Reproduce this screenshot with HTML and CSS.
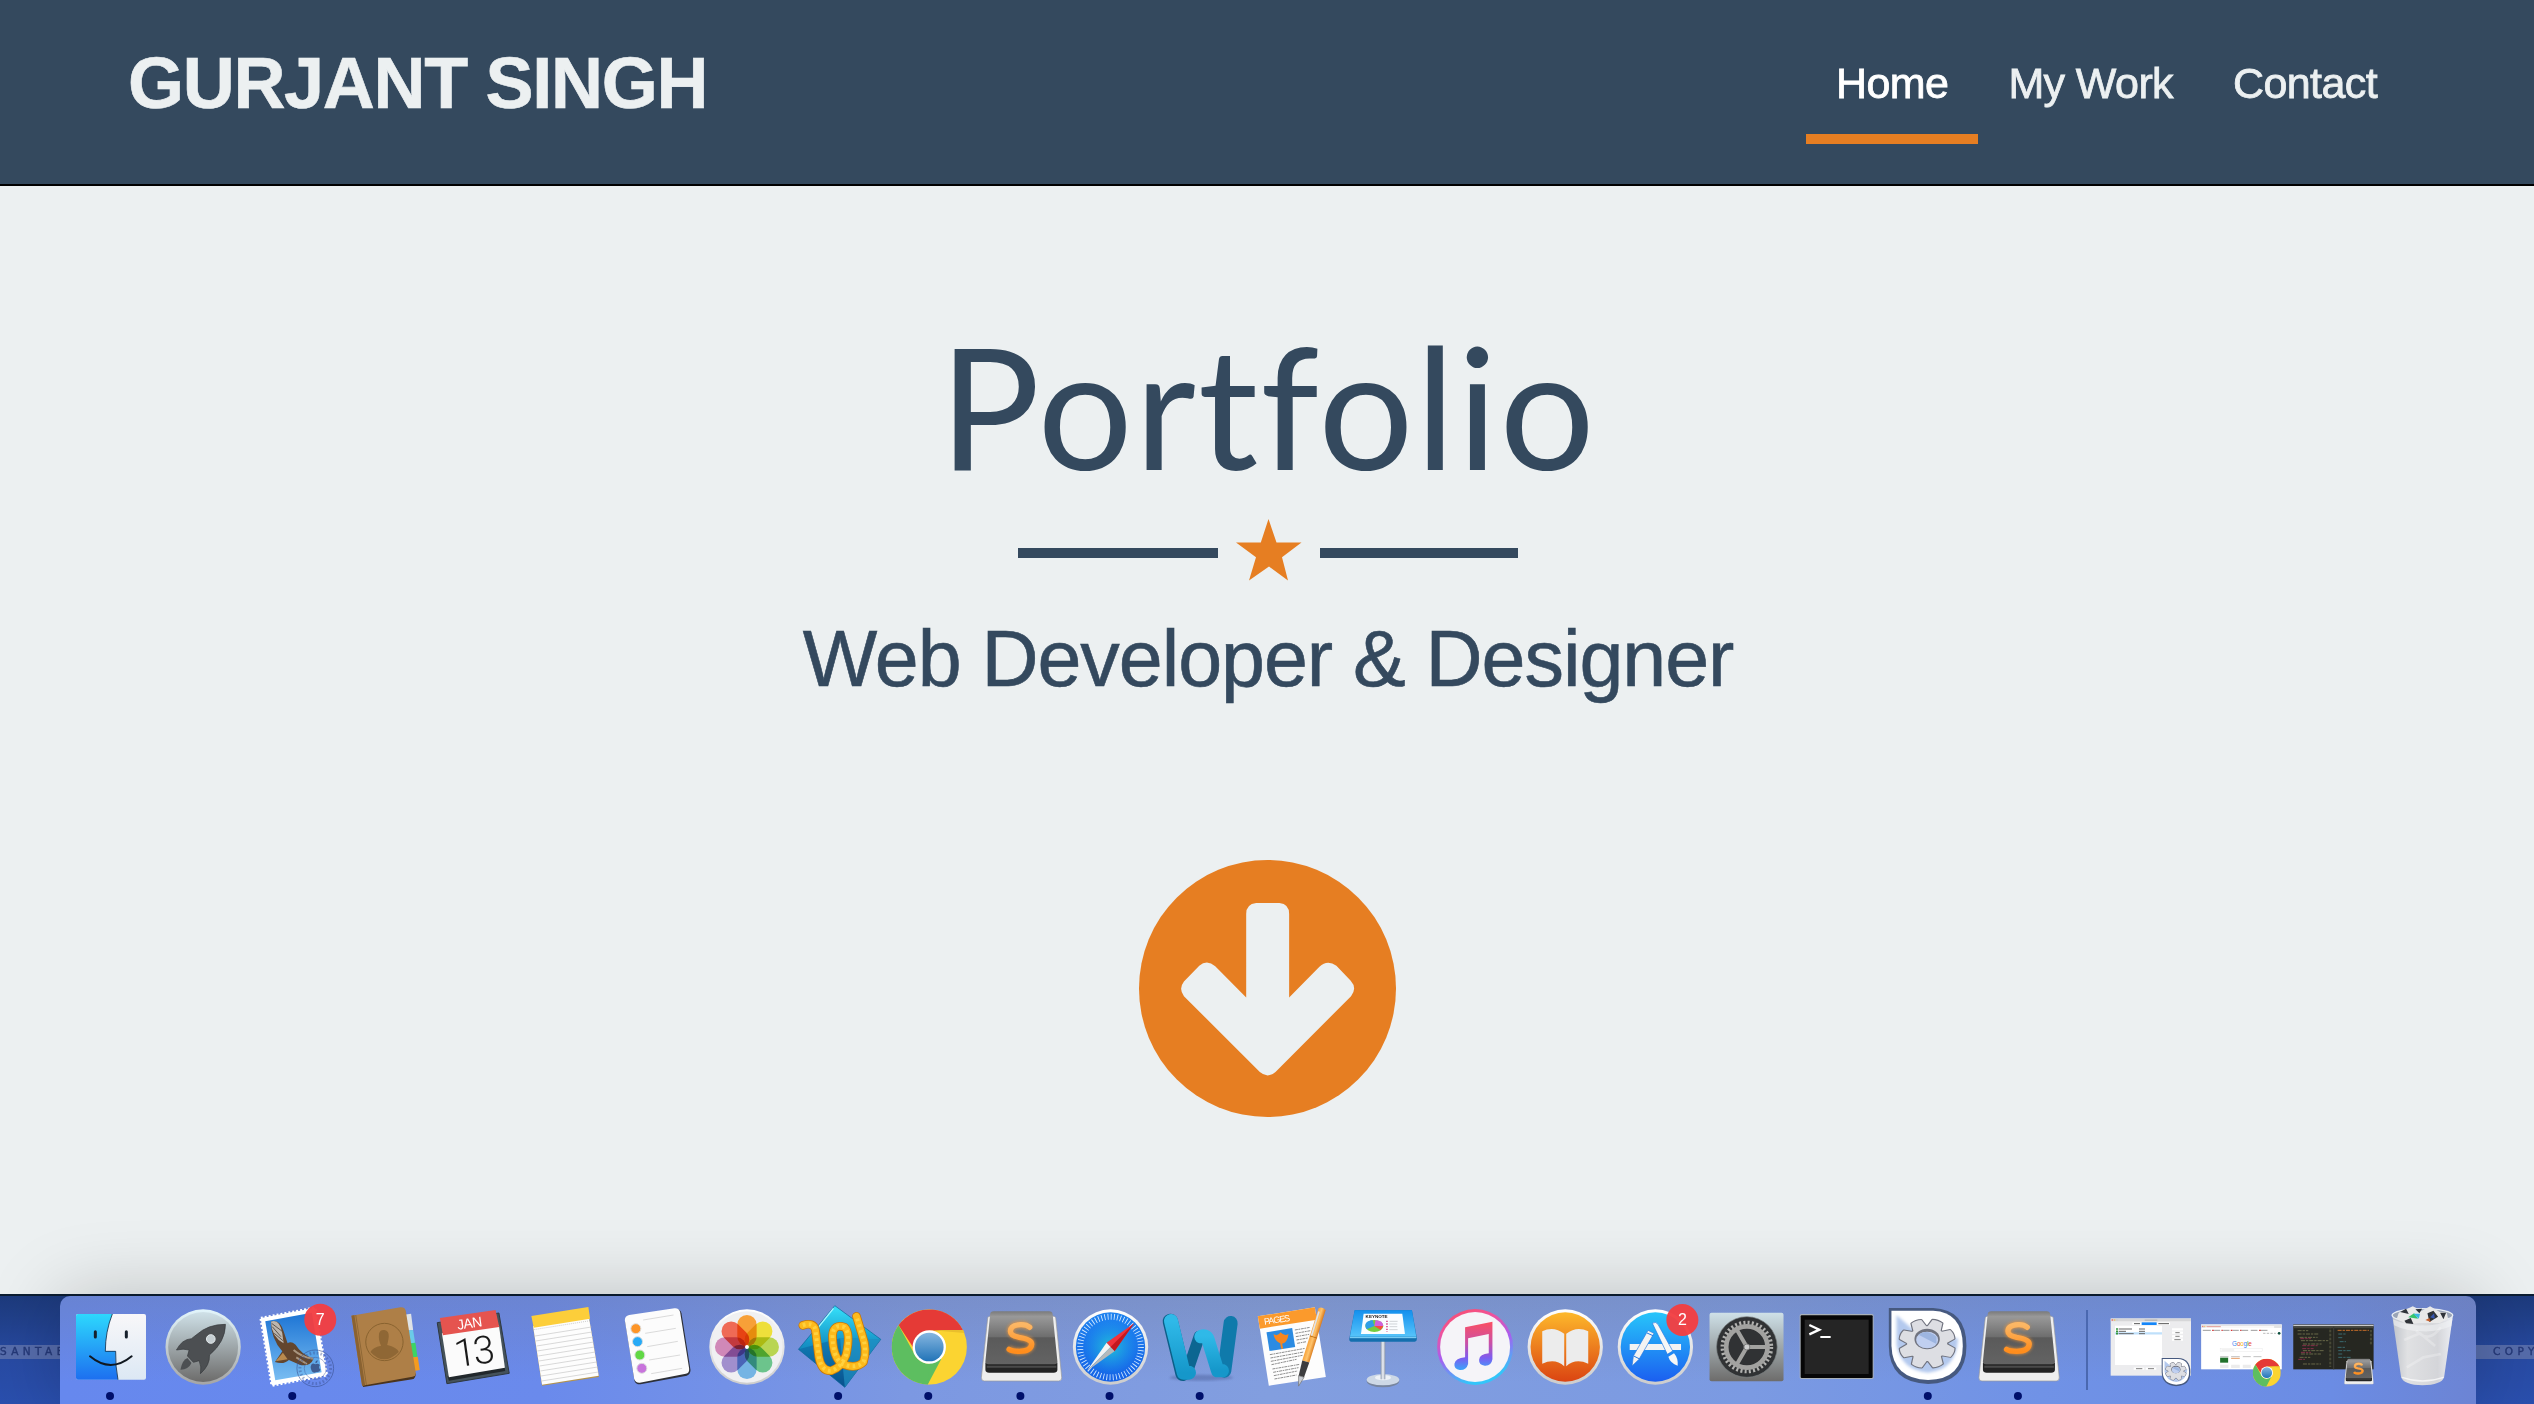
FILE: index.html
```html
<!DOCTYPE html>
<html lang="en">
<head>
<meta charset="utf-8">
<title>Gurjant Singh</title>
<link rel="stylesheet" href="styles.css">
</head>
<body>
<svg class="defs" width="0" height="0" aria-hidden="true">
  <defs>
    <linearGradient id="finderL" x1="0" y1="0" x2="0" y2="1"><stop offset="0" stop-color="#2dd8fd"/><stop offset="1" stop-color="#1d6ff0"/></linearGradient>
    <linearGradient id="finderR" x1="0" y1="0" x2="0" y2="1"><stop offset="0" stop-color="#f8f7f9"/><stop offset="1" stop-color="#dce8f4"/></linearGradient>
    <linearGradient id="steel" x1="0" y1="0" x2="0" y2="1"><stop offset="0" stop-color="#cfe1e8"/><stop offset="1" stop-color="#6d6c6b"/></linearGradient>
    <linearGradient id="rim" x1="0" y1="0" x2="0" y2="1"><stop offset="0" stop-color="#e2f5fb"/><stop offset="1" stop-color="#a5a5a5"/></linearGradient>
    <linearGradient id="whiteRim" x1="0" y1="0" x2="0" y2="1"><stop offset="0" stop-color="#fff"/><stop offset="1" stop-color="#ccc"/></linearGradient>
    <linearGradient id="sky" x1="0" y1="0" x2="0" y2="1"><stop offset="0" stop-color="#1c74d4"/><stop offset="1" stop-color="#79bdf2"/></linearGradient>
    <linearGradient id="key" x1="0" y1="0" x2="0" y2="1"><stop offset="0" stop-color="#7b7b7b"/><stop offset=".1" stop-color="#999"/><stop offset=".48" stop-color="#6e6e6e"/><stop offset=".5" stop-color="#5a5a5a"/><stop offset="1" stop-color="#636363"/></linearGradient>
    <linearGradient id="safari" x1="0" y1="0" x2="0" y2="1"><stop offset="0" stop-color="#1d82ef"/><stop offset="1" stop-color="#1562e6"/></linearGradient>
    <radialGradient id="safariGlow"><stop offset="0" stop-color="#1fc0d4"/><stop offset="1" stop-color="#1fa0f0" stop-opacity="0"/></radialGradient>
    <linearGradient id="word" x1="0" y1="0" x2="0" y2="1"><stop offset="0" stop-color="#2fb9e8"/><stop offset="1" stop-color="#1597ca"/></linearGradient>
    <linearGradient id="itunes" x1="0" y1="0" x2=".35" y2="1"><stop offset="0" stop-color="#fb4f5f"/><stop offset=".3" stop-color="#f0529c"/><stop offset=".6" stop-color="#a95df0"/><stop offset="1" stop-color="#33c5fa"/></linearGradient>
    <linearGradient id="note" gradientUnits="userSpaceOnUse" x1="970" y1="155" x2="970" y2="300"><stop offset="0" stop-color="#fb4f62"/><stop offset=".45" stop-color="#c950a8"/><stop offset=".75" stop-color="#7d5cf0"/><stop offset="1" stop-color="#39a5fa"/></linearGradient>
    <linearGradient id="books" x1="0" y1="0" x2="0" y2="1"><stop offset="0" stop-color="#fdb82b"/><stop offset="1" stop-color="#db4412"/></linearGradient>
    <linearGradient id="store" x1="0" y1="0" x2="0" y2="1"><stop offset="0" stop-color="#27c5fa"/><stop offset="1" stop-color="#1b5ff0"/></linearGradient>
    <linearGradient id="diamond" x1="0" y1="0" x2="0" y2="1"><stop offset="0" stop-color="#36e2fb"/><stop offset=".45" stop-color="#1595c8"/><stop offset="1" stop-color="#064a85"/></linearGradient>
    <linearGradient id="bin" x1="0" y1="0" x2="1" y2="0"><stop offset="0" stop-color="#bfc3ca"/><stop offset=".25" stop-color="#e0e1e3"/><stop offset=".75" stop-color="#d4d5d9"/><stop offset="1" stop-color="#eceef3"/></linearGradient>
    <linearGradient id="sOrange" x1="0" y1="0" x2="0" y2="1"><stop offset="0" stop-color="#fcb765"/><stop offset="1" stop-color="#ff8d1c"/></linearGradient>
    <linearGradient id="keynote" x1="0" y1="0" x2="0" y2="1"><stop offset="0" stop-color="#1390ee"/><stop offset="1" stop-color="#56c4fa"/></linearGradient>
    <linearGradient id="pole" x1="0" y1="0" x2="1" y2="0"><stop offset="0" stop-color="#8b98ac"/><stop offset=".5" stop-color="#f2f4f8"/><stop offset="1" stop-color="#8793a8"/></linearGradient>
    <linearGradient id="pen" x1="0" y1="0" x2="1" y2="0"><stop offset="0" stop-color="#f7a23a"/><stop offset=".5" stop-color="#ffc46c"/><stop offset="1" stop-color="#d9791a"/></linearGradient>
    <linearGradient id="chromeBlue" x1="0" y1="0" x2="0" y2="1"><stop offset="0" stop-color="#86b6e0"/><stop offset="1" stop-color="#2274b8"/></linearGradient>
    <filter id="glow" x="-40%" y="-40%" width="180%" height="180%"><feGaussianBlur stdDeviation="5"/></filter>
    <filter id="soft" x="-20%" y="-20%" width="140%" height="140%"><feGaussianBlur stdDeviation="3"/></filter>

    <symbol id="chrome" viewBox="-113 -113 226 226">
      <circle r="113" fill="#fbd431"/>
      <path d="M-92-65A113 113 0 0 1 102-49H0L-49 0Z" fill="#e53a36"/>
      <path d="M0-51H102A113 113 0 0 1 105-42Z" fill="#e9bf2c"/>
      <path d="M-92-65-45 20A49 49 0 0 0 20 46L-5 113A113 113 0 0 1-92-65Z" fill="#5dbe60"/>
      <path d="M-5 113 36 36 20 30 0 50Z" fill="#5dbe60"/>
      <circle r="50" fill="#fff"/><circle r="43" fill="url(#chromeBlue)"/>
    </symbol>
    <symbol id="sublime" viewBox="600 120 247 216">
      <path d="M622 143Q624 138 632 138H816Q824 138 826 143L844 322Q845 332 835 333H612Q602 333 603 322Z" fill="#efefef" stroke="#999" stroke-width="2"/>
      <path d="M615 278H831V300Q830 308 820 308H626Q616 308 615 300Z" fill="#242424"/>
      <path d="M619 287H828V293H619Z" fill="#4a4a4a"/>
      <path d="M629 134Q630 124 640 124H806Q816 124 817 134L831 274Q832 283 822 283H624Q614 283 615 274Z" fill="url(#key)"/>
      <path d="M748 176Q740 163 720 164Q690 166 690 184Q690 197 716 202Q754 208 754 222Q752 244 716 244Q694 244 684 234" fill="none" stroke="#ff9a30" stroke-width="20" opacity=".65" filter="url(#glow)"/>
      <path d="M748 172Q738 163 720 164Q690 166 690 184Q690 197 716 202Q754 208 754 222Q752 244 716 244Q694 244 686 238" fill="none" stroke="url(#sOrange)" stroke-width="16" stroke-linecap="round"/>
    </symbol>
    <path id="tooth" d="M-22-50-16-82Q0-88 16-82L22-50Z"/>
    <g id="teeth">
      <use href="#tooth"/><use href="#tooth" transform="rotate(45)"/><use href="#tooth" transform="rotate(90)"/><use href="#tooth" transform="rotate(135)"/>
      <use href="#tooth" transform="rotate(180)"/><use href="#tooth" transform="rotate(225)"/><use href="#tooth" transform="rotate(270)"/><use href="#tooth" transform="rotate(315)"/>
    </g>
    <symbol id="gearApp" viewBox="1042 108 242 238">
      <path d="M1047 114H1180Q1280 118 1280 228Q1280 340 1165 342Q1048 338 1047 228Z" fill="#46597f"/>
      <path d="M1055 122H1180Q1269 126 1269 228Q1269 328 1165 330Q1058 326 1055 228Z" fill="#fff"/>
      <path d="M1070 135 1150 205H1255Q1250 300 1165 308Q1085 302 1070 225Z" fill="#b4c9ee" filter="url(#glow)"/>
      <g transform="translate(1162 221) scale(1 .87) rotate(22)">
        <g fill="#70737f" stroke="#70737f" stroke-width="7" stroke-linejoin="round"><use href="#teeth"/><circle r="60"/></g>
        <g fill="#dddee3"><use href="#teeth"/><circle r="60"/></g>
      </g>
      <ellipse cx="1162" cy="207" rx="38" ry="31" fill="#70737f"/>
      <ellipse cx="1162" cy="210" rx="33" ry="25" fill="#c0cff0"/>
      <path d="M1136 194Q1160 176 1190 200V222Z" fill="#9db5e0"/>
    </symbol>
  </defs>
</svg>

<header class="site-header">
  <h1 class="brand">GURJANT SINGH</h1>
  <nav class="nav">
    <a class="nav-link active">Home</a>
    <a class="nav-link">My Work</a>
    <a class="nav-link">Contact</a>
  </nav>
</header>

<main class="hero">
  <h2 class="hero-title">Portfolio</h2>
  <div class="divider">
    <span class="bar"></span>
    <svg class="star" viewBox="0 0 66 62"><path d="M32.5 0 40.5 23.5H65.5L46 38.3 52 61.5 33 47.5 13 61.5 20 38.3 0 23.5H24.8Z" fill="#e67e22"/></svg>
    <span class="bar bar-right"></span>
  </div>
  <p class="hero-sub">Web Developer &amp; Designer</p>
  <svg class="down" viewBox="118 90 772 772">
    <circle cx="504" cy="476" r="386" fill="#e67e22"/>
    <path d="M470 219H540Q569 222 569 252V503L660 411Q684 388 711 408L754 453Q774 475 755 499L528 727Q504 747 481 727L253 499Q236 477 253 455L299 408Q322 388 347 409L440 503V252Q440 222 470 219Z" fill="#ecf0f1"/>
  </svg>
</main>

<footer class="desktop">
  <div class="wall-band"><span class="wall-left">SANTAE</span><span class="wall-right">COPY</span></div>
  <div class="dock">
    <!-- Finder -->
    <svg class="app" viewBox="198 78 272.6 324">
      <rect x="228" y="132" width="210" height="197" rx="6" fill="url(#finderR)"/>
      <path d="M337 132Q316 185 316 243H347Q346 290 354 329H234Q228 329 228 323V138Q228 132 234 132Z" fill="url(#finderL)"/>
      <path d="M337 132Q316 185 316 244H347Q346 290 354 329" fill="none" stroke="#15304d" stroke-width="2.5"/>
      <path d="M286 185V201M379 185V201" stroke="#16202c" stroke-width="9" stroke-linecap="round"/>
      <path d="M270 259Q332 311 395 259" fill="none" stroke="#111820" stroke-width="6" stroke-linecap="round"/>
      <circle class="run" cx="330" cy="378" r="12"/>
    </svg>
    <!-- Launchpad -->
    <svg class="app" viewBox="470.6 78 272.6 324">
      <circle cx="609" cy="231" r="113" fill="url(#rim)"/><circle cx="609" cy="231" r="105" fill="url(#steel)"/>
      <path d="M676 163Q625 162 588 195L574 206Q545 208 529 240Q550 235 567 240L562 258 580 277 597 272Q605 290 601 311Q630 285 628 255Q676 215 676 163Z" fill="#4c4f52" stroke="#34373a" stroke-width="2"/>
      <path d="M562 264Q546 270 541 299Q566 298 574 279Z" fill="#4c4f52"/>
      <circle cx="632" cy="207" r="13" fill="#c5ced2" stroke="#e4eaec" stroke-width="3"/>
    </svg>
    <!-- Mail -->
    <svg class="app" viewBox="743.2 78 272.6 324">
      <path d="M782 145 944 114 979 315 815 346Z" fill="#fff" stroke="#fff" stroke-width="9" stroke-dasharray="6 6"/>
      <path d="M782 145 944 114 979 315 815 346Z" fill="#fff"/>
      <path d="M795 154 935 128 964 307 825 331Z" fill="url(#sky)"/>
      <path d="M812 155Q838 145 850 184L862 220Q872 212 886 224Q905 255 940 266Q930 290 900 285L866 270Q850 285 824 276L846 244Q812 205 812 155Z" fill="#63462e"/>
      <path d="M812 155Q838 145 846 190L850 220Q814 200 812 155Z" fill="#bcb6ae"/>
      <path d="M816 170 842 200M814 160 846 184M822 190 848 212" stroke="#5d564f" stroke-width="3"/>
      <path d="M880 240Q905 262 938 266M888 262 920 282" fill="none" stroke="#a9967f" stroke-width="6"/>
      <path d="M826 274 848 248 862 268Z" fill="#b98a4e"/>
      <g fill="none" stroke="#394f8e" opacity=".6"><circle cx="945" cy="295" r="55" stroke-width="3"/><circle cx="945" cy="295" r="46" stroke-width="9" stroke-dasharray="5 6" opacity=".7"/><circle cx="945" cy="295" r="33" stroke-width="2"/></g>
      <path d="M945 283Q934 276 931 291Q933 308 942 308L949 306Q957 308 961 299Q953 293 959 285Q952 279 945 283ZM945 280Q945 272 952 270Q953 278 945 280Z" fill="#33477c" opacity=".8"/>
      <circle cx="960" cy="149" r="48" fill="#f23e42" opacity=".96"/>
      <text x="960" y="165" class="badge">7</text>
      <circle class="run" cx="876" cy="378" r="12"/>
    </svg>
    <!-- Contacts -->
    <svg class="app" viewBox="1015.7 78 272.6 324">
      <path d="M1200 136 1232 131 1238 180 1208 184Z" fill="#dfe3e6"/><path d="M1210 184 1238 180 1244 218 1214 222Z" fill="#6bcbe8"/><path d="M1214 222 1245 218 1251 260 1220 264Z" fill="#3cd465"/><path d="M1220 264 1252 260 1258 300 1224 306Z" fill="#f49b1f"/>
      <path d="M1088 351 1236 328Q1247 324 1246 310L1085 340Z" fill="#4b341d"/>
      <path d="M1053 137 1200 112Q1213 111 1216 122L1246 308Q1247 318 1236 320L1085 347Z" fill="#ae7f47"/>
      <path d="M1053 137 1062 135 1094 345 1085 347Z" fill="#8a6231"/><path d="M1066 135 1098 345" stroke="#8f6735" stroke-width="3"/>
      <circle cx="1152" cy="216" r="56" fill="none" stroke="#89622f" stroke-width="3"/>
      <path d="M1136 190Q1140 178 1152 180Q1166 182 1165 200Q1162 220 1160 225Q1190 232 1195 246Q1150 290 1110 246Q1116 232 1142 227Q1133 210 1136 190Z" fill="#8f6735"/>
    </svg>
    <!-- Calendar -->
    <svg class="app" viewBox="28.3 78 272.6 324">
      <path d="M53 158 238 129 269 310 82 341Z" fill="#45525a" stroke="#2d373f" stroke-width="3"/>
      <path d="M84 318 255 290 257 303 88 332Z" fill="#22282c"/>
      <path d="M67 190 238 165 256 293 88 322Z" fill="#fbfbfb"/>
      <path d="M61 144 228 120 239 171 70 196Z" fill="#e5544f"/>
      <g class="cal" transform="translate(151 174) rotate(-8)"><text class="month">JAN</text></g>
      <g class="cal" transform="translate(166 284) rotate(-8)"><text class="day">13</text></g>
    </svg>
    <!-- Notes -->
    <svg class="app" viewBox="300.9 78 272.6 324">
      <path d="M340 170 508 144 538 321 367 347Z" fill="#b3934e"/>
      <path d="M340 168 508 143 537 317 367 344Z" fill="#fdfdfd"/>
      <path d="M335 138 506 111 511 146 342 173Z" fill="#fcce3a"/>
      <path d="M342 179 512 152" stroke="#999" stroke-width="1.5" stroke-dasharray="3 3"/>
      <path d="M346 198 515 171M348 213 517 186M351 228 520 201M353 243 522 216M356 258 524 231M358 273 527 246M360 288 529 261M362 303 531 276M364 318 534 291M366 333 536 306" stroke="#c5c5c5" stroke-width="2"/>
    </svg>
    <!-- Reminders -->
    <svg class="app" viewBox="573.5 78 272.6 324">
      <path d="M630 138 768 118Q782 117 785 130L812 300Q812 312 801 317L662 343Q648 344 644 333L616 154Q617 142 630 138Z" fill="#2d3038"/>
      <path d="M628 135 764 115Q778 114 781 127L808 296Q809 309 798 311L660 338Q647 339 643 327L615 151Q615 138 628 135Z" fill="#fcfcfc"/>
      <g stroke="#ddd" stroke-width="3"><circle cx="648" cy="176" r="15" fill="#fd9527"/><circle cx="653" cy="215" r="15" fill="#27aaf6"/><circle cx="660" cy="255" r="15" fill="#61d845"/><circle cx="666" cy="295" r="15" fill="#c874dc"/></g>
      <path d="M670 150 761 135M676 190 768 175M682 230 774 214M688 270 781 255M694 311 787 295" stroke="#c9c9c9" stroke-width="2"/>
    </svg>
    <!-- Photos -->
    <svg class="app" viewBox="846.1 78 272.6 324">
      <circle cx="981" cy="231" r="113" fill="url(#whiteRim)"/><circle cx="981" cy="231" r="107" fill="#f0f0f2"/>
      <g class="petals" transform="translate(981 231)">
        <rect x="-29" y="-96" width="58" height="94" rx="29" fill="#f7a038"/>
        <rect x="-29" y="-96" width="58" height="94" rx="29" fill="#eedf3b" transform="rotate(45)"/>
        <rect x="-29" y="-96" width="58" height="94" rx="29" fill="#b9d552" transform="rotate(90)"/>
        <rect x="-29" y="-96" width="58" height="94" rx="29" fill="#6cc48c" transform="rotate(135)"/>
        <rect x="-29" y="-96" width="58" height="94" rx="29" fill="#75b4e4" transform="rotate(180)"/>
        <rect x="-29" y="-96" width="58" height="94" rx="29" fill="#a18fcd" transform="rotate(225)"/>
        <rect x="-29" y="-96" width="58" height="94" rx="29" fill="#d088b8" transform="rotate(270)"/>
        <rect x="-29" y="-96" width="58" height="94" rx="29" fill="#ef6a55" transform="rotate(315)"/>
      </g>
      <circle cx="981" cy="231" r="6" fill="#fff"/>
    </svg>
    <!-- Rope editor -->
    <svg class="app" viewBox="38.6 78 272.6 324">
      <path d="M164 107 302 208 194 352 55 238Z" fill="url(#diamond)" stroke="#0b6596" stroke-width="2"/>
      <path d="M55 238 180 205 302 208 194 352Z" fill="#0a5c98" opacity=".45"/><path d="M194 352 180 205 302 208Z" fill="#29a3d4" opacity=".5"/>
      <path d="M160 115 100 190" stroke="#a9f6ff" stroke-width="4"/>
      <g fill="none" stroke-linecap="round" stroke-linejoin="round">
        <path d="M68 166Q100 155 106 180L116 260Q124 305 154 302Q184 292 198 255Q212 190 194 172Q160 160 157 196Q158 260 184 280Q226 300 250 276Q262 240 246 195L229 139" stroke="#c97808" stroke-width="26"/>
        <path d="M68 166Q100 155 106 180L116 260Q124 305 154 302Q184 292 198 255Q212 190 194 172Q160 160 157 196Q158 260 184 280Q226 300 250 276Q262 240 246 195L229 139" stroke="#fdba1c" stroke-width="21"/>
        <path d="M68 166Q100 155 106 180L116 260Q124 305 154 302Q184 292 198 255Q212 190 194 172Q160 160 157 196Q158 260 184 280Q226 300 250 276Q262 240 246 195L229 139" stroke="#ffd13f" stroke-width="12" stroke-dasharray="8 10" stroke-linecap="butt"/>
      </g>
      <circle class="run" cx="174" cy="378" r="12"/>
    </svg>
    <!-- Chrome -->
    <svg class="app" viewBox="311.2 78 272.6 324"><use href="#chrome" x="334" y="118" width="226" height="226"/><circle class="run" cx="444" cy="378" r="12"/></svg>
    <!-- Sublime Text -->
    <svg class="app" viewBox="583.8 78 272.6 324"><use href="#sublime" x="600" y="120" width="247" height="216"/><circle class="run" cx="720" cy="378" r="12"/></svg>
    <!-- Safari -->
    <svg class="app" viewBox="856.4 78 272.6 324">
      <circle cx="993" cy="231" r="113" fill="url(#whiteRim)"/><circle cx="993" cy="231" r="104" fill="url(#safari)"/><circle cx="993" cy="231" r="85" fill="url(#safariGlow)"/>
      <circle cx="993" cy="231" r="91" fill="none" stroke="#d5ebff" stroke-width="18" stroke-dasharray="2.6 6.93"/>
      <path d="M1064 160 981 218 1005 244Z" fill="#f0333c"/><path d="M1064 160 993 231 1005 244Z" fill="#c41820"/>
      <path d="M922 303 981 218 993 231Z" fill="#f4f4f4"/><path d="M922 303 993 231 1005 244Z" fill="#b5b9bb"/>
      <circle class="run" cx="990" cy="378" r="12"/>
    </svg>
    <!-- Word -->
    <svg class="app" viewBox="19 78 272.6 324">
      <ellipse cx="155" cy="323" rx="95" ry="9" fill="#3b4c85" opacity=".35" filter="url(#soft)"/>
      <g fill="none" stroke-linecap="round" stroke-linejoin="round">
        <path d="M243 159 224 302" stroke="#0f7aab" stroke-width="42"/>
        <path d="M149 199 112 308" stroke="#0c6691" stroke-width="34"/>
        <path d="M62 154 100 310" stroke="#0b5f88" stroke-width="46"/>
        <path d="M64 153 102 308 118 308" stroke="url(#word)" stroke-width="42"/>
        <path d="M154 200Q172 192 177 215L204 302 218 302" stroke="url(#word)" stroke-width="40"/>
      </g>
      <circle class="run" cx="150" cy="378" r="12"/>
    </svg>
    <!-- Pages -->
    <svg class="app" viewBox="291.5 78 272.6 324">
      <path d="M324 139 495 112 528 321 357 347Z" fill="#fdfdfd"/>
      <path d="M324 139 495 112 501 149 330 176Z" fill="#fb9a2c"/>
      <g transform="translate(344 164) rotate(-8)"><text class="pages">PAGES</text></g>
      <path d="M350 187 427 174 436 231 359 243Z" fill="#2b8be2"/>
      <path d="M371 193Q385 200 392 187Q404 200 416 192Q413 218 397 221L400 236 394 236 391 220Q374 212 371 193Z" fill="#f7861f"/>
      <path d="M435 180 481 172M437 190 482 182M438 200 478 193M440 210 474 204M442 220 470 215M360 254 466 235M362 264 462 246M363 274 458 256M365 284 440 268M368 297 450 283M370 307 446 293M372 317 443 303M374 327 440 315" stroke="#8d8d8d" stroke-width="3" stroke-dasharray="9 2 5 2"/>
      <g transform="translate(517 117) rotate(17)">
        <path d="M-11 0Q0-8 11 0L10 165H-12Z" fill="url(#pen)"/><path d="M-12 165H10L8 212H-9Z" fill="#3d3d3f"/><path d="M-9 212H8L0 242Z" fill="#c8ccd2" stroke="#777" stroke-width="2"/><path d="M-7 10V86" stroke="#dfe3ea" stroke-width="5"/><path d="M-12 88H11" stroke="#b96912" stroke-width="3"/>
      </g>
    </svg>
    <!-- Keynote -->
    <svg class="app" viewBox="564.1 78 272.6 324">
      <ellipse cx="699" cy="333" rx="49" ry="19" fill="#77859f"/><ellipse cx="699" cy="329" rx="49" ry="17" fill="#cdd8e6"/><ellipse cx="699" cy="323" rx="24" ry="8" fill="#eef2f7"/>
      <rect x="692" y="212" width="14" height="116" fill="url(#pole)"/>
      <path d="M614 121H786L801 206Q801 214 794 215H604Q597 214 598 206Z" fill="#146fae"/>
      <path d="M614 121H786L799 200H600Z" fill="url(#keynote)"/><path d="M600 203H799" stroke="#8cdcff" stroke-width="3"/>
      <path d="M641 131H757L765 192H633Z" fill="#fafdff"/>
      <text x="647" y="143" class="keynote" textLength="66" lengthAdjust="spacingAndGlyphs">KEYNOTE</text>
      <ellipse cx="673" cy="168" rx="27" ry="18" fill="#74cc3f"/><path d="M673 168 650 178Q637 155 668 150Z" fill="#2e9ee8"/><path d="M673 168 677 150Q700 152 700 168Z" fill="#cf62d9"/><path d="M673 168H700L692 180Z" fill="#fa4b3c"/>
      <path d="M711 152V185" stroke="#d44f8f" stroke-width="5" stroke-dasharray="4 4"/><path d="M719 154H743M718 162H742M719 170H742M718 179H743" stroke="#d0d4d8" stroke-width="3"/>
    </svg>
    <!-- iTunes -->
    <svg class="app" viewBox="836.7 78 272.6 324">
      <circle cx="975" cy="231" r="114" fill="url(#itunes)"/><circle cx="975" cy="231" r="105" fill="#f5f4f8"/>
      <path d="M945 172 1027 155V268Q1024 288 1004 287Q986 285 987 269Q989 252 1016 250V192L954 205V282Q949 301 929 300Q911 297 913 281Q916 265 945 262Z" fill="url(#note)"/>
    </svg>
    <!-- iBooks -->
    <svg class="app" viewBox="-60.7 78 272.6 324">
      <circle cx="75" cy="231" r="113" fill="url(#whiteRim)"/><circle cx="75" cy="231" r="104" fill="url(#books)"/>
      <path d="M72 191Q40 167 6 184V281Q45 264 72 289ZM78 191Q110 167 144 184V281Q105 264 78 289Z" fill="#ececec"/>
    </svg>
    <!-- App Store -->
    <svg class="app" viewBox="211.9 78 272.6 324">
      <circle cx="345" cy="231" r="113" fill="url(#whiteRim)"/><circle cx="345" cy="231" r="104" fill="url(#store)"/>
      <rect x="268" y="222" width="154" height="18" fill="#f3f3f3"/>
      <path d="M323 181 341 190 296 268 275 288 279 258Z" fill="#f3f3f3" stroke="#2477df" stroke-width="2"/>
      <path d="M336 160Q346 153 353 163L397 243 381 253Z" fill="#f7f7f7" stroke="#2477df" stroke-width="2"/><path d="M384 260 401 250Q414 265 412 287Q390 280 384 260Z" fill="#f7f7f7"/>
      <path d="M320 189 338 197M280 258 298 267" stroke="#2477df" stroke-width="3"/>
      <circle cx="426" cy="150" r="48" fill="#f23e42" opacity=".96"/>
      <text x="426" y="166" class="badge">2</text>
    </svg>
    <!-- System Preferences -->
    <svg class="app" viewBox="484.4 78 272.6 324">
      <rect x="510" y="128" width="222" height="206" rx="6" fill="url(#steel)"/>
      <circle cx="622" cy="231" r="91" fill="#303234"/><circle cx="622" cy="231" r="91" fill="none" stroke="#7c8284" stroke-width="2"/>
      <circle cx="622" cy="231" r="73" fill="none" stroke="#b2b2b0" stroke-width="12" stroke-dasharray="6.1 6.64"/>
      <circle cx="622" cy="231" r="62" fill="none" stroke="#a2a2a0" stroke-width="14"/>
      <path d="M622 231H682M622 231 592 179M622 231 592 283" stroke="#a2a2a0" stroke-width="12"/>
      <circle cx="622" cy="231" r="9" fill="#cfd0d0" stroke="#7b7b7b" stroke-width="3"/>
    </svg>
    <!-- Terminal -->
    <svg class="app" viewBox="757 78 272.6 324">
      <rect x="780" y="132" width="222" height="195" rx="5" fill="#a8b0b8"/><rect x="783" y="136" width="216" height="188" rx="3" fill="#060606"/><rect x="795" y="149" width="192" height="163" fill="#252525"/>
      <path d="M809 165 839 179 809 193" fill="none" stroke="#fff" stroke-width="7"/><path d="M842 201H873" stroke="#fff" stroke-width="6"/>
    </svg>
    <!-- Server manager -->
    <svg class="app" viewBox="1029.6 78 272.6 324"><use href="#gearApp" x="1042" y="108" width="242" height="238"/><circle class="run" cx="1164" cy="378" r="12"/></svg>
    <!-- Sublime Text -->
    <svg class="app" viewBox="588.2 78 272.6 324"><use href="#sublime" x="600" y="120" width="247" height="216"/><circle class="run" cx="720" cy="378" r="12"/></svg>

    <span class="separator"></span>

    <!-- Minimised manager window -->
    <svg class="app" viewBox="213 78 272.6 324">
      <rect x="230" y="145" width="241" height="172" fill="#ececee"/><path d="M230 146H471V154H230Z" fill="#d6d6d8"/>
      <circle cx="235" cy="150" r="2.5" fill="#f15b51"/><circle cx="242" cy="150" r="2.5" fill="#f5bd40"/><circle cx="249" cy="150" r="2.5" fill="#ccc"/>
      <path d="M332 150.500H370" stroke="#999" stroke-width="2"/>
      <rect x="295" y="157" width="113" height="8" fill="#fff"/><rect x="323" y="157" width="45" height="8" fill="#1586f8"/><path d="M300 161H318M373 161H405" stroke="#555" stroke-width="3"/>
      <rect x="243" y="167" width="141" height="118" fill="#fff"/><path d="M243 190H384" stroke="#bfe0fb" stroke-width="7"/>
      <path d="M246 177H252M246 184H252M246 191H252" stroke="#35963c" stroke-width="5"/><path d="M254 177H294M254 184H276M254 191H299M315 177H333M315 184H333M315 191H333" stroke="#666" stroke-width="3"/>
      <path d="M414 178H447M414 188H447M414 199H447M414 209H447M299 296H331M335 296H367" stroke="#fff" stroke-width="7"/><path d="M424 188H437M424 199H437M421 209H440M306 296H325M342 296H360" stroke="#666" stroke-width="2.500"/>
      <use href="#gearApp" x="381" y="262" width="90" height="88"/>
    </svg>
    <!-- Minimised browser window -->
    <svg class="app" viewBox="485.6 78 272.6 324">
      <rect x="501" y="163" width="242" height="135" fill="#fff"/><path d="M501 164H743V174H501Z" fill="#e2e3e5"/><path d="M514 171H720" stroke="#fff" stroke-width="5"/>
      <circle cx="506" cy="169" r="2" fill="#f15b51"/><circle cx="512" cy="169" r="2" fill="#f5bd40"/><path d="M517 170H560" stroke="#d76a60" stroke-width="2"/>
      <path d="M506 181H530M540 181H558M567 181H586M596 181H614M622 181H642M650 181H670M680 181H700" stroke="#888" stroke-width="2.500"/><path d="M534 181H539M562 181H566M590 181H595M618 181H622M675 181H680" stroke="#d23b3b" stroke-width="4"/>
      <circle cx="735" cy="190" r="4" fill="#0b4e3d"/><path d="M687 190H725" stroke="#999" stroke-width="2" stroke-dasharray="7 4"/>
      <text x="594" y="229" class="google"><tspan fill="#4285f4">G</tspan><tspan fill="#ea4335">o</tspan><tspan fill="#fbbc05">o</tspan><tspan fill="#4285f4">g</tspan><tspan fill="#34a853">l</tspan><tspan fill="#ea4335">e</tspan></text>
      <rect x="558" y="236" width="126" height="8" fill="#fff" stroke="#ddd"/><path d="M562 240H600" stroke="#ccc" stroke-width="1.500"/>
      <path d="M558 260H583M591 260H617M626 260H650M658 260H682" stroke="#b5b5b5" stroke-width="2.500"/><rect x="558" y="263" width="24" height="15" fill="#22722c"/><path d="M591 265H617" stroke="#e49a63" stroke-width="3"/>
      <path d="M558 289H583M591 289H617M626 289H650" stroke="#ececec" stroke-width="10"/>
      <use href="#chrome" x="656" y="266" width="84" height="84"/>
    </svg>
    <!-- Minimised editor window -->
    <svg class="app" viewBox="758.2 78 272.6 324">
      <rect x="777" y="163" width="241" height="135" fill="#262721"/><path d="M777 164H1018V169H777Z" fill="#c9c9c9"/><path d="M777 172H1018" stroke="#45463f" stroke-width="5"/><path d="M898 170V298" stroke="#3a3b35" stroke-width="4"/>
      <g stroke-width="2" fill="none" stroke-dasharray="12 3 7 3"><path d="M790 182H822M790 192H852M796 202H850M800 212H882M806 222H862M806 242H868M800 252H860M796 262H828M806 282H860" stroke="#8b8a5c"/><path d="M798 206H830M804 227H850M804 236H838M800 247H830M792 268H812" stroke="#b6335f"/><path d="M912 192H934M912 203H925M916 215H935M910 232H933M912 242H950M912 252H926M912 262H950" stroke="#468c99"/><path d="M910 181H1004" stroke="#c46b28" stroke-width="3"/></g>
      <path d="M888 176V290M1010 180V225" stroke="#54553e" stroke-width="6" stroke-dasharray="2 2"/>
      <use href="#sublime" x="929" y="265" width="90" height="79"/>
    </svg>
    <!-- Trash -->
    <svg class="app" viewBox="1030.700 78 272.6 324">
      <path d="M1077 140 1103 322Q1112 345 1167 346Q1224 345 1232 322L1258 140Z" fill="url(#bin)"/>
      <ellipse cx="1167" cy="136" rx="91" ry="20" fill="#9aa4b6" stroke="#e8edf5" stroke-width="4"/>
      <path d="M1096 128 1138 109 1165 122 1190 109 1218 125 1240 128 1244 146 1218 160 1165 158 1120 162 1090 146Z" fill="#e9e9e9"/>
      <path d="M1100 126 1118 116 1126 132ZM1113 152 1132 144 1140 162 1118 160ZM1146 118 1166 116 1158 130ZM1182 130 1200 122 1214 140 1188 156ZM1220 128 1238 128 1230 148Z" fill="#2f3339"/>
      <path d="M1124 142 1142 130 1154 146Z" fill="#36c46c"/><path d="M1140 131 1160 131 1156 146Z" fill="#3ab7e3"/><path d="M1190 142 1202 130 1204 146Z" fill="#3556b0"/><path d="M1176 150 1188 144 1192 156Z" fill="#c4612f"/>
      <path d="M1079 148Q1120 168 1167 166Q1214 168 1257 146L1254 168Q1215 186 1167 184Q1118 184 1082 166Z" fill="#f3f4f5" opacity=".55"/>
      <path d="M1112 210 1160 190 1205 228M1120 292 1170 262 1222 252M1148 182Q1185 222 1222 172" stroke="#fff" stroke-width="8" opacity=".25" fill="none"/>
      <path d="M1106 322Q1167 344 1230 322" stroke="#fff" stroke-width="4" fill="none" opacity=".7"/>
    </svg>
  </div>
</footer>
</body>
</html>
```
FILE: styles.css
```css
* { box-sizing: border-box; }

body {
  margin: 0;
  width: 100vw;
  height: 100vh;
  overflow: hidden;
  display: flex;
  flex-direction: column;
  background: #ecf0f1;
  color: #34495e;
  font-family: "Liberation Sans", Arial, Helvetica, sans-serif;
}

.defs { position: absolute; }

.site-header {
  flex: none;
  height: 186px;
  padding: 0 127px 0 128px;
  display: flex;
  justify-content: space-between;
  background: #34495e;
  border-bottom: 2px solid #000;
}

.brand {
  margin: 0;
  padding-top: 43px;
  font-size: 72px;
  line-height: 80px;
  font-weight: 700;
  letter-spacing: -1.3px;
  color: #ecf0f1;
  -webkit-text-stroke: 0.6px;
}

.nav { display: flex; align-items: flex-start; }

.nav-link {
  height: 144px;
  padding: 58px 30px 0;
  font-size: 43px;
  line-height: 50px;
  letter-spacing: -0.6px;
  color: #ecf0f1;
  -webkit-text-stroke: 0.8px;
}

.nav-link.active {
  color: #fff;
  border-bottom: 10px solid #e67e22;
}

.hero {
  flex: 1;
  min-height: 0;
  padding: 135px 0 0 2px;
  display: flex;
  flex-direction: column;
  align-items: center;
}

.hero-title {
  margin: 0;
  font: 400 168px/168px Lato, sans-serif;
  letter-spacing: 2px;
  font-variant-ligatures: none;
}

.divider {
  width: 500px;
  height: 62px;
  margin-top: 30px;
  display: flex;
  align-items: center;
  justify-content: space-between;
}

.bar { width: 200px; height: 10px; margin-top: 6px; background: #34495e; }
.bar-right { width: 198px; }
.star { width: 66px; height: 62px; }

.hero-sub {
  margin: 38px 0 0;
  font-size: 79px;
  line-height: 80px;
  letter-spacing: -1.05px;
  -webkit-text-stroke: 0.6px;
}

.down { flex: none; width: 257px; height: 257px; margin: 161px 1px 0 0; }

.desktop {
  flex: none;
  position: relative;
  height: 110px;
  padding-top: 51px;
  background: linear-gradient(#0c1d31 0 2px, #1d3a7c 2px, #284ba4 60%, #2a4fae);
}

.wall-band {
  height: 14px;
  display: flex;
  justify-content: space-between;
  background: #566cab;
  color: #253978;
  font: 10.5px/13px "DejaVu Sans", sans-serif;
  letter-spacing: 4.4px;
  -webkit-text-stroke: 0.4px;
}

.wall-right { width: 41px; white-space: nowrap; }

/* The dock floats over the wallpaper and shades the page above it */
.dock {
  position: absolute;
  left: 60px;
  right: 58px;
  top: 2px;
  height: 108px;
  padding-left: 6px;
  display: flex;
  border-radius: 10px 10px 0 0;
  background:
    linear-gradient(rgba(110, 120, 150, .3), rgba(110, 130, 190, 0) 80%),
    linear-gradient(90deg, #6688ee, #6a8aec 20%, #7c98e2 35%, #829edf 50%, #7b9ae2 70%, #7092e6 82%, #6b8ce4 94%, #6c84d4);
  box-shadow: 0 0 76px rgba(0, 0, 0, .21);
}

.app {
  flex: none;
  display: block;
  width: 90.86px;
  height: 108px;
  overflow: visible;
}

.separator {
  flex: none;
  width: 2px;
  height: 80px;
  margin: 14px 17px 0 21px;
  background: #4a68b0;
}

.run { fill: #00106b; }
.petals rect { mix-blend-mode: multiply; }
.petals { isolation: isolate; }

.badge { font: 48px "Liberation Sans", sans-serif; fill: #fff; text-anchor: middle; }
.cal text { text-anchor: middle; }
.month { font: 42px "Liberation Sans", sans-serif; letter-spacing: -2px; fill: #fff; }
.day { font: 300 116px Roboto, sans-serif; letter-spacing: -8px; fill: #1a1a1a; }
.pages { font: 27px "Liberation Sans", sans-serif; letter-spacing: -3px; fill: #fff; }
.keynote { font: 700 10px "Liberation Sans", sans-serif; fill: #222; }
.google { font: 19px "Liberation Sans", sans-serif; letter-spacing: -.5px; }
```
